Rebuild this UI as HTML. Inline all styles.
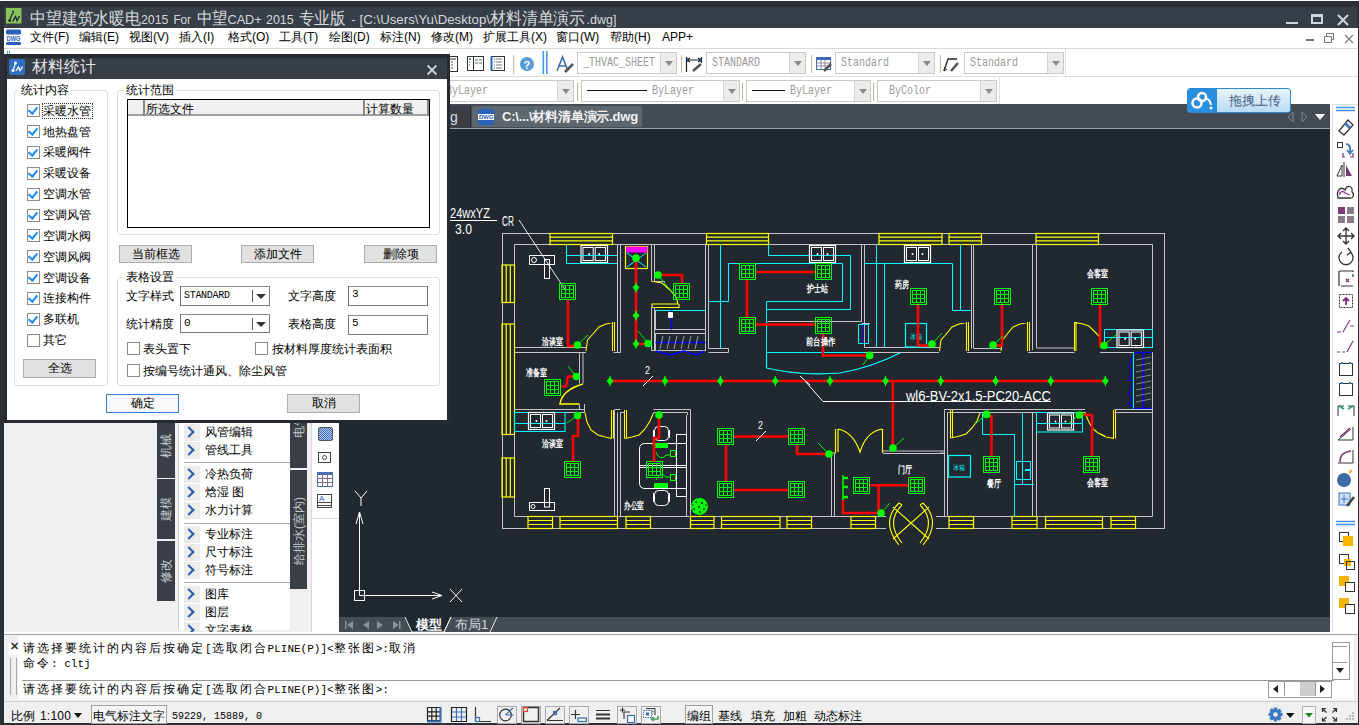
<!DOCTYPE html>
<html><head><meta charset="utf-8">
<style>
*{box-sizing:border-box;margin:0;padding:0}
html,body{width:1359px;height:725px;overflow:hidden;background:#2b3036;font-family:"Liberation Sans",sans-serif;position:relative}
.a{position:absolute}
.t{position:absolute;white-space:nowrap;line-height:1}
#title{left:0;top:0;width:1359px;height:28px;background:#2a2f36;border-top:1px solid #fff}
#title:before{content:"";position:absolute;left:4px;top:6px;width:1353px;height:21px;background:#383e47}
#menu{left:4px;top:28px;width:1354px;height:20px;background:#fff}
#tb{left:4px;top:48px;width:1354px;height:56px;background:#fff;border-top:1px solid #d9d9d9}
#tabbar{left:339px;top:104px;width:992px;height:25px;background:#454b53}
#draw{left:339px;top:129px;width:991px;height:488px;background:#212830;overflow:hidden}
#laytab{left:339px;top:617px;width:991px;height:15px;background:#464c54}
#rtb{left:1330px;top:104px;width:28px;height:528px;background:#fff}
#lpanel{left:4px;top:104px;width:335px;height:528px;background:#f0f0f0}
#cmd{left:4px;top:632px;width:1354px;height:69px;background:#f0f0f0}
#status{left:4px;top:701px;width:1354px;height:22px;background:#f0f0f0;border-top:1px solid #d0d0d0}
#dlg{left:4px;top:54px;width:446px;height:369px;background:#262b32}
#dlg:before{content:"";position:absolute;left:3px;top:4px;width:440px;height:21px;background:#373d45}
#dlgbody{left:3px;top:25px;width:440px;height:341px;background:#fff}
.menu span{position:absolute;top:2px;font-size:12px;color:#000;line-height:14px;white-space:nowrap}
.combo{position:absolute;background:#fff;border:1px solid #c9c9c9;font-family:"Liberation Mono",monospace;font-size:13px;color:#9a9a9a;line-height:20px;padding-left:5px;white-space:nowrap;overflow:hidden}
.combo .dd{position:absolute;right:0;top:0;width:16px;height:100%;background:#ececec;border-left:1px solid #d6d6d6}
.combo .dd:after{content:"";position:absolute;left:4px;top:8px;border-left:4px solid transparent;border-right:4px solid transparent;border-top:5px solid #8a8a8a}
.sep{position:absolute;width:1px;background:#c9b992}

.grp{position:absolute;border:1px solid #d7dfe6;border-radius:3px}
.lg{position:absolute;font-size:12px;line-height:14px;background:#fff;padding:0 2px;white-space:nowrap;color:#000}
.cb{position:absolute;width:13px;height:13px;border:1px solid #8c8c8c;background:#fff}
.cb.on:after{content:"";position:absolute;left:2px;top:0px;width:4px;height:7px;border-right:2px solid #1a8cff;border-bottom:2px solid #1a8cff;transform:rotate(40deg)}
.lb{position:absolute;font-size:12px;line-height:14px;white-space:nowrap;color:#000}
.btn{position:absolute;background:#e1e1e1;border:1px solid #adadad;font-size:12px;line-height:16px;text-align:center;color:#000}
.inp{position:absolute;border:1px solid #7a7a7a;border-top-color:#8a8a8a;background:#fff;font-family:"Liberation Mono",monospace;font-size:11px;line-height:17px;padding-left:3px;color:#000;white-space:nowrap}

.vt{position:absolute;background:#3a3f47}
.vtx{position:absolute;width:100px;height:14px;color:#c8ccd0;font-size:12px;line-height:14px;text-align:center;transform:rotate(-90deg);white-space:nowrap}
.mi{position:absolute;left:5px;width:106px;height:17px}
.mi i{position:absolute;left:0;top:0;width:16px;height:17px;background:#ececec}
.mi i:after{content:"";position:absolute;left:1px;top:4px;width:6px;height:6px;border-right:2.5px solid #2b5ea8;border-top:2.5px solid #2b5ea8;transform:rotate(45deg)}
.mi span{position:absolute;left:21px;top:1px;font-size:12px;line-height:14px;white-space:nowrap;color:#000}
.msep{position:absolute;left:5px;width:106px;height:1px;background:#a8a8a8}

.cl{position:absolute;white-space:nowrap;font-size:12px;line-height:14px;color:#000}
.cl b{font-weight:normal;letter-spacing:2px}
.cl i{font-style:normal;font-family:"Liberation Mono",monospace;font-size:11px}
.st{position:absolute;white-space:nowrap;font-size:12px;line-height:14px;color:#000;top:7px}
.sb{position:absolute;top:3px;width:19px;height:18px;border:1px solid #c8c8c8;background:#f7f7f7}
.ct{display:inline-block;transform:scaleX(.77);transform-origin:0 50%}
</style></head><body>
<div id="title" class="a">
  <svg class="a" style="left:6px;top:7px" width="16" height="16"><rect x="0" y="0" width="15.5" height="15.5" fill="#86c55a"/><path d="M6 3.5 Q7.5 2.5 7.5 4.5 Q7 6 6 6 L3.5 13" stroke="#223" stroke-width="1.2" fill="none"/><circle cx="3.6" cy="12.6" r="1.4" fill="#223"/><path d="M6.5 13.5 L9.5 8.5 L11 12.5 L13.5 8" stroke="#223" stroke-width="1.4" fill="none"/></svg>
  <svg class="a" style="left:0;top:0" width="700" height="28"><text x="30" y="23" font-size="17" fill="#d6dade" font-family="Liberation Sans" textLength="111.0" lengthAdjust="spacingAndGlyphs">中望建筑水暖电</text><text x="141" y="23" font-size="13.5" fill="#d6dade" font-family="Liberation Sans" textLength="27.3" lengthAdjust="spacingAndGlyphs">2015</text><text x="173.4" y="23" font-size="13.5" fill="#d6dade" font-family="Liberation Sans" textLength="17.6" lengthAdjust="spacingAndGlyphs">For</text><text x="196.6" y="23" font-size="17" fill="#d6dade" font-family="Liberation Sans" textLength="30.9" lengthAdjust="spacingAndGlyphs">中望</text><text x="227.5" y="23" font-size="13.5" fill="#d6dade" font-family="Liberation Sans" textLength="34.2" lengthAdjust="spacingAndGlyphs">CAD+</text><text x="266" y="23" font-size="13.5" fill="#d6dade" font-family="Liberation Sans" textLength="27.7" lengthAdjust="spacingAndGlyphs">2015</text><text x="298.8" y="23" font-size="17" fill="#d6dade" font-family="Liberation Sans" textLength="46.7" lengthAdjust="spacingAndGlyphs">专业版</text><text x="351.3" y="23" font-size="13.5" fill="#d6dade" font-family="Liberation Sans" textLength="4.2" lengthAdjust="spacingAndGlyphs">-</text><text x="359.5" y="23" font-size="13.5" fill="#d6dade" font-family="Liberation Sans" textLength="130.5" lengthAdjust="spacingAndGlyphs">[C:\Users\Yu\Desktop\</text><text x="490" y="23" font-size="17" fill="#d6dade" font-family="Liberation Sans" textLength="95.2" lengthAdjust="spacingAndGlyphs">材料清单演示</text><text x="586.5" y="23" font-size="13.5" fill="#d6dade" font-family="Liberation Sans" textLength="30.0" lengthAdjust="spacingAndGlyphs">.dwg]</text></svg>
  <div class="a" style="left:1286px;top:21px;width:12px;height:2px;background:#cfd6de"></div>
  <div class="a" style="left:1311px;top:13px;width:12px;height:10px;border:2px solid #cfd6de;border-top-width:3px"></div>
  <svg class="a" style="left:1337px;top:13px" width="12" height="12"><path d="M1 1L11 11M11 1L1 11" stroke="#cfd6de" stroke-width="2"/></svg>
</div>
<div id="menu" class="a menu">
  <svg class="a" style="left:2px;top:1px" width="16" height="18"><rect x="0" y="0.5" width="15" height="5" rx="1.5" fill="#2a5fc0"/><rect x="0" y="13" width="15" height="3" rx="1.2" fill="#2a5fc0"/><text x="7.5" y="11.8" font-size="6.5" font-weight="bold" fill="#2a5fc0" text-anchor="middle" font-family="Liberation Sans" textLength="14" lengthAdjust="spacingAndGlyphs">DWG</text></svg>
  <span style="left:26px">文件(F)</span>
  <span style="left:75px">编辑(E)</span>
  <span style="left:125px">视图(V)</span>
  <span style="left:175px">插入(I)</span>
  <span style="left:224px">格式(O)</span>
  <span style="left:275px">工具(T)</span>
  <span style="left:325px">绘图(D)</span>
  <span style="left:376px">标注(N)</span>
  <span style="left:427px">修改(M)</span>
  <span style="left:479px">扩展工具(X)</span>
  <span style="left:552px">窗口(W)</span>
  <span style="left:606px">帮助(H)</span>
  <span style="left:658px">APP+</span>
  <div class="a" style="left:1302px;top:11px;width:8px;height:2px;background:#777"></div>
  <svg class="a" style="left:1319px;top:4px" width="12" height="12"><path d="M1.5 4.5h7v6h-7z M3.5 4.5v-3h7v6h-2" stroke="#777" fill="none"/></svg>
  <svg class="a" style="left:1340px;top:6px" width="10" height="10"><path d="M1 1L9 9M9 1L1 9" stroke="#777" stroke-width="1.2"/></svg>
</div>
<div id="tb" class="a">
  <div class="a" style="left:3px;top:2px;width:1px;height:4px;background:#4a9af0"></div><div class="a" style="left:5px;top:2px;width:1px;height:4px;background:#4a9af0"></div>
  <div class="a" style="left:0;top:27px;width:1354px;height:1px;background:#e0e0e0"></div>
  <svg class="a" style="left:0;top:0" width="1061" height="28">
    <g transform="translate(-4,-48)">
      <rect x="445.5" y="55.5" width="12" height="15" fill="#fff" stroke="#333"/><rect x="447" y="57" width="9" height="2" fill="#999"/><path d="M447 61h2M451 61h2M447 64h2M451 64h2M447 67h2M451 67h2" stroke="#555"/>
      <rect x="467.5" y="55.5" width="16" height="14" fill="#fff" stroke="#333"/><path d="M473.5 55.5V69.5" stroke="#333"/><path d="M469 58h2" stroke="#2a62b8" stroke-width="1.5"/><path d="M475 59h3M479 59h3M475 62h3M479 62h3" stroke="#999" stroke-width="1.5"/><path d="M469 61h1M469 64h1" stroke="#555"/>
      <rect x="491.5" y="55.5" width="13" height="14" fill="#fff" stroke="#333"/><path d="M491.5 55.5V69.5" stroke="#2a62b8" stroke-width="2"/><path d="M494 58h1M494 61h1M494 64h1M494 67h1" stroke="#2a62b8"/><path d="M496 58h6M496 61h6M496 64h6M496 67h6" stroke="#777"/>
      <rect x="513" y="54" width="1.2" height="19" fill="#cfc3a8"/>
      <circle cx="527" cy="63" r="7" fill="#5b9bd5"/><text x="523.5" y="67.5" font-size="11" font-weight="bold" fill="#fff" font-family="Liberation Sans">?</text>
      <rect x="542.5" y="50" width="1.6" height="23" fill="#4a9af0"/><rect x="546" y="50" width="1.6" height="23" fill="#4a9af0"/>
      <path d="M557 70 L562.5 56 L568 70 M559 65 H566" stroke="#3d6eb0" stroke-width="1.6" fill="none"/><path d="M565 71 L573 63" stroke="#555" stroke-width="2.5"/>
      <path d="M686.5 56V71 M701.5 56V62 M687 59H701 M687 59l3 -2M687 59l3 2M701 59l-3 -2M701 59l-3 2" stroke="#222" stroke-width="1.2" fill="none"/><path d="M687.5 57V61M700.5 57V61" stroke="#2a62b8"/><path d="M693 70 L701 63" stroke="#555" stroke-width="2.5"/>
      <rect x="816.5" y="56.5" width="14" height="12" fill="#fff" stroke="#3a6ab8"/><rect x="816.5" y="56.5" width="14" height="2.5" fill="#3a6ab8"/><path d="M817 62H830M817 65H830M821 59V68M825 59V68" stroke="#8a6a8a" stroke-width="0.8"/><path d="M824 70 L831 63" stroke="#555" stroke-width="2.5"/>
      <path d="M944 70 L948 58 H957" stroke="#222" stroke-width="1.3" fill="none"/><path d="M944 70l1-4M944 70l3-2" stroke="#222"/><path d="M951 70 L958 62" stroke="#555" stroke-width="2.5"/>
    </g>
  </svg>
  <div class="combo" style="left:573px;top:3px;width:100px;height:22px"><span class="ct">_THVAC_SHEET</span><div class="dd"></div></div>
  <div class="sep" style="left:677px;top:6px;height:18px"></div>
  <div class="combo" style="left:702px;top:3px;width:100px;height:22px"><span class="ct">STANDARD</span><div class="dd"></div></div>
  <div class="sep" style="left:807px;top:6px;height:18px"></div>
  <div class="combo" style="left:831px;top:3px;width:100px;height:22px"><span class="ct">Standard</span><div class="dd"></div></div>
  <div class="sep" style="left:936px;top:6px;height:18px"></div>
  <div class="combo" style="left:960px;top:3px;width:100px;height:22px"><span class="ct">Standard</span><div class="dd"></div></div>
  <div class="a" style="left:1061px;top:0;width:1px;height:28px;background:#e0e0e0"></div>
  <div class="combo" style="left:436px;top:31px;width:134px;height:22px"><span class="ct">ByLayer</span><div class="dd"></div></div>
  <div class="sep" style="left:573px;top:34px;height:18px"></div>
  <div class="combo" style="left:577px;top:31px;width:159px;height:22px"><span style="display:inline-block;width:60px;border-top:1px solid #111;vertical-align:middle;margin:0 5px 0 0px"></span><span class="ct">ByLayer</span><div class="dd"></div></div>
  <div class="sep" style="left:738px;top:34px;height:18px"></div>
  <div class="combo" style="left:742px;top:31px;width:125px;height:22px"><span style="display:inline-block;width:33px;border-top:1px solid #111;vertical-align:middle;margin:0 5px 0 0px"></span><span class="ct">ByLayer</span><div class="dd"></div></div>
  <div class="sep" style="left:869px;top:34px;height:18px"></div>
  <div class="combo" style="left:873px;top:31px;width:120px;height:22px"><span class="ct">&nbsp;ByColor</span><div class="dd"></div></div>
  <div class="a" style="left:995px;top:28px;width:1px;height:28px;background:#e0e0e0"></div>
</div>
<div id="lpanel" class="a">
  <div class="vt" style="left:153px;top:319px;width:18px;height:55px"></div>
  <div class="vt" style="left:153px;top:375px;width:18px;height:60px"></div>
  <div class="vt" style="left:153px;top:437px;width:18px;height:60px"></div>
  <div class="vtx" style="left:112.0px;top:335.0px">机械</div>
  <div class="vtx" style="left:112.0px;top:398.0px">建模</div>
  <div class="vtx" style="left:112.0px;top:460.0px">修改</div>
  <div class="a" style="left:174px;top:319px;width:112px;height:207px;background:#fff;border-left:1px solid #cfcfcf">
    <div class="mi" style="top:1.0px"><i></i><span>风管编辑</span></div>
    <div class="mi" style="top:18.9px"><i></i><span>管线工具</span></div>
    <div class="mi" style="top:42.5px"><i></i><span>冷热负荷</span></div>
    <div class="mi" style="top:60.5px"><i></i><span>焓湿 图</span></div>
    <div class="mi" style="top:78.5px"><i></i><span>水力计算</span></div>
    <div class="mi" style="top:103.3px"><i></i><span>专业标注</span></div>
    <div class="mi" style="top:121.2px"><i></i><span>尺寸标注</span></div>
    <div class="mi" style="top:139.1px"><i></i><span>符号标注</span></div>
    <div class="mi" style="top:162.9px"><i></i><span>图库</span></div>
    <div class="mi" style="top:180.5px"><i></i><span>图层</span></div>
    <div class="mi" style="top:198.5px"><i></i><span>文字表格</span></div>
    <div class="msep" style="top:39.3px"></div>
    <div class="msep" style="top:99.6px"></div>
    <div class="msep" style="top:159.0px"></div>
  </div>
  <div class="vt" style="left:286px;top:319px;width:17px;height:45px"></div>
  <div class="vt" style="left:286px;top:366px;width:17px;height:119px"></div>
  <div class="vtx" style="left:245px;top:315px">电气</div>
  <div class="vtx" style="left:245.0px;top:420.0px">给排水(室内)</div>
  <div class="a" style="left:307px;top:319px;width:28px;height:209px;background:#fff;border-left:1px solid #d8d8d8">
    <div class="a" style="left:6px;top:4px;width:15px;height:14px;border:1px solid #555;border-radius:2px;background:repeating-conic-gradient(#3d6cc0 0 25%,#b8c8ec 0 50%) 0 0/2px 2px"></div>
    <div class="a" style="left:6px;top:29px;width:13px;height:11px;border:1px solid #444"><div class="a" style="left:3px;top:2px;width:5px;height:5px;border:1px solid #444;border-radius:50%"></div></div>
    <div class="a" style="left:5px;top:49px;width:16px;height:15px;border:1px solid #4a6fb0;border-top:3px solid #4a6fb0;background:repeating-linear-gradient(90deg,transparent 0 4px,#8a6a8a 4px 5px),repeating-linear-gradient(0deg,transparent 0 3px,#8a6a8a 3px 4px)"></div>
    <div class="a" style="left:5px;top:71px;width:15px;height:14px;border:1px solid #444;background:linear-gradient(transparent 7px,#444 7px 8px,transparent 8px 10px,#444 10px 11px,transparent 11px)"><div class="t" style="left:1px;top:0;font-size:8px;color:#2a62b8">A</div></div>
    <div class="a" style="left:0;top:95px;width:28px;height:1px;background:#e0e0e0"></div>
  </div>
</div>
<div id="tabbar" class="a">
  <div class="a" style="left:0;top:2px;width:132px;height:23px;background:#3a3f46;border-right:1px solid #2a2e33"></div>
  <div class="t" style="left:111px;top:6px;font-size:14px;color:#d8dce0">g</div>
  <div class="a" style="left:133px;top:2px;width:170px;height:21px;background:#5c666f;border-radius:3px 3px 0 0"></div>
  <div class="a" style="left:139px;top:5px;width:16px;height:16px;background:#2a62b8;border-radius:2px"><div class="a" style="left:0;top:5px;width:16px;height:6px;background:#fff"></div><div class="t" style="left:1px;top:5px;font-size:6px;line-height:6px;color:#2a62b8;font-weight:bold">DWG</div></div>
  <div class="t" style="left:163px;top:6px;font-size:13px;color:#f2f2f2;font-weight:bold;letter-spacing:-0.2px">C:\...\材料清单演示.dwg</div>
  <svg class="a" style="left:948px;top:7px" width="40" height="12"><path d="M6 1 L1 6 L6 11 Z" fill="none" stroke="#7d858d"/><path d="M15 1 L20 6 L15 11 Z" fill="none" stroke="#7d858d"/><path d="M28 3 L38 3 L33 9 Z" fill="#fff"/></svg>
</div>
<div id="draw" class="a"><!--DRAW--><svg class="a" style="left:0;top:0" width="991" height="488"><g transform="translate(-339,-129)"><rect x="502.5" y="233.5" width="662.0" height="295.0" stroke="#c4c4c4" stroke-width="1" fill="none"/><path d="M514.5 244.5 L514.5 516.5" stroke="#c4c4c4" stroke-width="1" fill="none" /><path d="M514.5 244.5 L1152.5 244.5" stroke="#c4c4c4" stroke-width="1" fill="none" /><path d="M1152.5 244.5 L1152.5 347.5" stroke="#c4c4c4" stroke-width="1" fill="none" /><path d="M1152.5 412.5 L1152.5 516.5" stroke="#c4c4c4" stroke-width="1" fill="none" /><path d="M514.5 516.5 L1152.5 516.5" stroke="#c4c4c4" stroke-width="1" fill="none" /><rect x="550.0" y="233.5" width="62.5" height="11.0" stroke="#ffff00" stroke-width="1.2" fill="none"/><path d="M550.0 237.2H612.5M550.0 240.8H612.5" stroke="#ffff00" stroke-width="1.2"/><rect x="706.5" y="233.5" width="62.0" height="11.0" stroke="#ffff00" stroke-width="1.2" fill="none"/><path d="M706.5 237.2H768.5M706.5 240.8H768.5" stroke="#ffff00" stroke-width="1.2"/><rect x="879.0" y="233.5" width="63.0" height="11.0" stroke="#ffff00" stroke-width="1.2" fill="none"/><path d="M879.0 237.2H942.0M879.0 240.8H942.0" stroke="#ffff00" stroke-width="1.2"/><rect x="949.0" y="233.5" width="32.5" height="11.0" stroke="#ffff00" stroke-width="1.2" fill="none"/><path d="M949.0 237.2H981.5M949.0 240.8H981.5" stroke="#ffff00" stroke-width="1.2"/><rect x="1036.0" y="233.5" width="62.5" height="11.0" stroke="#ffff00" stroke-width="1.2" fill="none"/><path d="M1036.0 237.2H1098.5M1036.0 240.8H1098.5" stroke="#ffff00" stroke-width="1.2"/><rect x="502.0" y="265.0" width="12.5" height="37.5" stroke="#ffff00" stroke-width="1.2" fill="none"/><path d="M506.2 265.0V302.5M510.3 265.0V302.5" stroke="#ffff00" stroke-width="1.2"/><rect x="502.0" y="324.0" width="12.5" height="110.5" stroke="#ffff00" stroke-width="1.2" fill="none"/><path d="M506.2 324.0V434.5M510.3 324.0V434.5" stroke="#ffff00" stroke-width="1.2"/><rect x="502.0" y="458.0" width="12.5" height="39.0" stroke="#ffff00" stroke-width="1.2" fill="none"/><path d="M506.2 458.0V497.0M510.3 458.0V497.0" stroke="#ffff00" stroke-width="1.2"/><rect x="528.0" y="516.5" width="24.5" height="12.0" stroke="#ffff00" stroke-width="1.2" fill="none"/><path d="M528.0 520.5H552.5M528.0 524.5H552.5" stroke="#ffff00" stroke-width="1.2"/><rect x="560.0" y="516.5" width="57.5" height="12.0" stroke="#ffff00" stroke-width="1.2" fill="none"/><path d="M560.0 520.5H617.5M560.0 524.5H617.5" stroke="#ffff00" stroke-width="1.2"/><rect x="626.0" y="516.5" width="24.5" height="12.0" stroke="#ffff00" stroke-width="1.2" fill="none"/><path d="M626.0 520.5H650.5M626.0 524.5H650.5" stroke="#ffff00" stroke-width="1.2"/><rect x="690.5" y="516.5" width="23.5" height="12.0" stroke="#ffff00" stroke-width="1.2" fill="none"/><path d="M690.5 520.5H714.0M690.5 524.5H714.0" stroke="#ffff00" stroke-width="1.2"/><rect x="721.5" y="516.5" width="58.5" height="12.0" stroke="#ffff00" stroke-width="1.2" fill="none"/><path d="M721.5 520.5H780.0M721.5 524.5H780.0" stroke="#ffff00" stroke-width="1.2"/><rect x="787.0" y="516.5" width="24.5" height="12.0" stroke="#ffff00" stroke-width="1.2" fill="none"/><path d="M787.0 520.5H811.5M787.0 524.5H811.5" stroke="#ffff00" stroke-width="1.2"/><rect x="851.0" y="516.5" width="24.5" height="12.0" stroke="#ffff00" stroke-width="1.2" fill="none"/><path d="M851.0 520.5H875.5M851.0 524.5H875.5" stroke="#ffff00" stroke-width="1.2"/><rect x="949.0" y="516.5" width="24.5" height="12.0" stroke="#ffff00" stroke-width="1.2" fill="none"/><path d="M949.0 520.5H973.5M949.0 524.5H973.5" stroke="#ffff00" stroke-width="1.2"/><rect x="1012.0" y="516.5" width="25.0" height="12.0" stroke="#ffff00" stroke-width="1.2" fill="none"/><path d="M1012.0 520.5H1037.0M1012.0 524.5H1037.0" stroke="#ffff00" stroke-width="1.2"/><rect x="1045.5" y="516.5" width="57.0" height="12.0" stroke="#ffff00" stroke-width="1.2" fill="none"/><path d="M1045.5 520.5H1102.5M1045.5 524.5H1102.5" stroke="#ffff00" stroke-width="1.2"/><rect x="1111.0" y="516.5" width="24.5" height="12.0" stroke="#ffff00" stroke-width="1.2" fill="none"/><path d="M1111.0 520.5H1135.5M1111.0 524.5H1135.5" stroke="#ffff00" stroke-width="1.2"/><path d="M617.5 244.5 L617.5 352.5" stroke="#c4c4c4" stroke-width="1" fill="none" /><path d="M620.5 244.5 L620.5 352.5" stroke="#c4c4c4" stroke-width="1" fill="none" /><path d="M514.5 347.5 L586.0 347.5" stroke="#c4c4c4" stroke-width="1" fill="none" /><path d="M514.5 352.5 L586.0 352.5" stroke="#c4c4c4" stroke-width="1" fill="none" /><path d="M613.5 352.5 L620.5 352.5" stroke="#c4c4c4" stroke-width="1" fill="none" /><path d="M651.5 244.5 L651.5 281.5 L665.0 281.5" stroke="#c4c4c4" stroke-width="1" fill="none" /><path d="M654.5 244.5 L654.5 281.5" stroke="#c4c4c4" stroke-width="1" fill="none" /><path d="M705.5 244.5 L705.5 350.5" stroke="#c4c4c4" stroke-width="1" fill="none" /><path d="M708.5 244.5 L708.5 348.5 L728.5 348.5 L728.5 352.5 L708.5 352.5" stroke="#c4c4c4" stroke-width="1" fill="none" /><path d="M651.5 307.5 L651.5 350.5 L655.0 350.5" stroke="#c4c4c4" stroke-width="1" fill="none" /><path d="M654.5 307.5 L654.5 350.5" stroke="#c4c4c4" stroke-width="1" fill="none" /><rect x="655.5" y="310.5" width="50.0" height="19.0" stroke="#c4c4c4" stroke-width="1" fill="none"/><rect x="655.5" y="333.5" width="50.0" height="17.0" stroke="#c4c4c4" stroke-width="1" fill="none"/><path d="M655.5 310.5 L705.5 310.5" stroke="#00ffff" stroke-width="1" fill="none" /><path d="M671.5 310.5 L671.5 329.5" stroke="#0000ff" stroke-width="1.5" fill="none" /><rect x="668" y="312" width="5" height="6" fill="#ffffff" rx="1"/><path d="M655.5 342.5 L705.5 342.5" stroke="#0000ff" stroke-width="1.5" fill="none" /><path d="M660 349L663 336M667 349L670 336M674 349L677 336M681 349L684 336M688 349L691 336M695 349L698 336" stroke="#bbb" stroke-width="0.8"/><path d="M656.0 351.0 L670.0 355.0 L684.0 351.0 L697.0 355.0 L704.0 351.0" stroke="#0000ff" stroke-width="1.5" fill="none" /><rect x="625.5" y="246.5" width="22.0" height="22.0" stroke="#ffff00" stroke-width="1.2" fill="none"/><rect x="626.5" y="247.0" width="20.5" height="5.0" stroke="#ff00ff" stroke-width="1" fill="#ff00ff"/><path d="M627.0 253.0 L646.0 267.0" stroke="#00ffff" stroke-width="1" fill="none" /><path d="M646.0 253.0 L627.0 267.0" stroke="#00ffff" stroke-width="1" fill="none" /><path d="M861.5 244.5 L861.5 321.5" stroke="#c4c4c4" stroke-width="1" fill="none" /><path d="M864.5 244.5 L864.5 347.5" stroke="#c4c4c4" stroke-width="1" fill="none" /><path d="M767.5 321.5 L861.5 321.5" stroke="#c4c4c4" stroke-width="1" fill="none" /><path d="M861.5 323.5 L870.0 323.5" stroke="#c4c4c4" stroke-width="1" fill="none" /><path d="M720.5 244.5 L720.5 348.5" stroke="#00ffff" stroke-width="1" fill="none" /><path d="M708.5 301.5 L728.5 301.5 L728.5 263.5 L842.5 263.5 L842.5 301.5 L766.5 301.5 L766.5 352.0" stroke="#00ffff" stroke-width="1" fill="none" /><path d="M768.5 244.5 L768.5 255.5 L850.5 255.5 L850.5 309.5 L767.0 309.5" stroke="#00ffff" stroke-width="1" fill="none" /><rect x="858.5" y="324.5" width="10.0" height="19.0" stroke="#00ffff" stroke-width="1" fill="none"/><path d="M863.5 324.5 L863.5 343.5" stroke="#0000ff" stroke-width="1.2" fill="none" /><path d="M766.5 352.5 H900 M766.5 352.5 V368 Q800 376 840 373 Q870 368 900 353" stroke="#00ffff" stroke-width="1.2" fill="none"/><path d="M971.5 244.5 L971.5 348.5" stroke="#c4c4c4" stroke-width="1" fill="none" /><path d="M973.5 244.5 L973.5 348.5" stroke="#c4c4c4" stroke-width="1" fill="none" /><path d="M864.5 347.5 L939.0 347.5" stroke="#c4c4c4" stroke-width="1" fill="none" /><path d="M864.5 352.5 L939.0 352.5" stroke="#c4c4c4" stroke-width="1" fill="none" /><path d="M967.0 352.5 L1001.0 352.5" stroke="#c4c4c4" stroke-width="1" fill="none" /><path d="M973.5 348.5 L1001.0 348.5" stroke="#c4c4c4" stroke-width="1" fill="none" /><path d="M876.5 244.5 L876.5 347.5" stroke="#00ffff" stroke-width="1" fill="none" /><path d="M884.5 263.5 L884.5 347.5" stroke="#00ffff" stroke-width="1" fill="none" /><path d="M864.5 263.5 L952.5 263.5 L952.5 310.5 L971.0 310.5" stroke="#00ffff" stroke-width="1" fill="none" /><path d="M960.5 244.5 L960.5 310.5" stroke="#00ffff" stroke-width="1" fill="none" /><rect x="905.5" y="323.5" width="21.0" height="23.5" stroke="#00ffff" stroke-width="1.2" fill="none"/><text x="910" y="339" font-size="7" fill="#00ffff" font-weight="normal" font-family='"Liberation Sans",sans-serif' textLength="12" lengthAdjust="spacingAndGlyphs">冰箱</text><path d="M1032.5 244.5 L1032.5 350.0" stroke="#c4c4c4" stroke-width="1" fill="none" /><path d="M1036.5 244.5 L1036.5 348.0" stroke="#c4c4c4" stroke-width="1" fill="none" /><path d="M1028.0 352.5 L1074.5 352.5" stroke="#c4c4c4" stroke-width="1" fill="none" /><path d="M1036.5 348.0 L1074.5 348.0" stroke="#c4c4c4" stroke-width="1" fill="none" /><path d="M1100.0 347.5 L1152.5 347.5" stroke="#c4c4c4" stroke-width="1" fill="none" /><path d="M1100.0 352.5 L1152.5 352.5" stroke="#c4c4c4" stroke-width="1" fill="none" /><rect x="1104.5" y="329.5" width="48.0" height="18.0" stroke="#00ffff" stroke-width="1" fill="none"/><path d="M1104.5 337.5 L1152.5 337.5" stroke="#00ffff" stroke-width="1" fill="none" /><path d="M1134.0 352.5 L1152.0 352.5" stroke="#0000ff" stroke-width="1.3" fill="none" /><path d="M1134.0 408.5 L1152.0 408.5" stroke="#0000ff" stroke-width="1.3" fill="none" /><path d="M1134.0 353.0 L1129.0 366.0 L1132.0 370.0 L1129.0 380.0 L1134.0 381.0 L1129.0 394.0 L1132.0 398.0 L1129.0 404.0 L1134.0 408.0" stroke="#0000ff" stroke-width="1.2" fill="none" /><path d="M1133.5 352.5 L1133.5 408.5" stroke="#00ffff" stroke-width="1" fill="none" /><path d="M1143.5 352.5 L1143.5 408.5" stroke="#0000ff" stroke-width="1.5" fill="none" /><path d="M1136 360L1151 357M1136 366L1151 363M1136 372L1151 369M1136 378L1151 375M1136 384L1151 381M1136 390L1151 387M1136 396L1151 393M1136 402L1151 399" stroke="#aaa" stroke-width="0.7"/><path d="M1152.5 352.5 L1152.5 412.5" stroke="#c4c4c4" stroke-width="1" fill="none" /><rect x="581.0" y="245.5" width="26.5" height="17.0" stroke="#ffffff" stroke-width="1.2" fill="none"/><rect x="583.0" y="247.5" width="10.2" height="13.0" stroke="#ffffff" stroke-width="1" fill="none"/><rect x="595.2" y="247.5" width="10.2" height="13.0" stroke="#ffffff" stroke-width="1" fill="none"/><circle cx="589.2" cy="254.0" r="1" fill="#ffffff"/><circle cx="599.2" cy="254.0" r="1" fill="#ffffff"/><rect x="809.5" y="245.5" width="26.0" height="17.0" stroke="#ffffff" stroke-width="1.2" fill="none"/><rect x="811.5" y="247.5" width="10.0" height="13.0" stroke="#ffffff" stroke-width="1" fill="none"/><rect x="823.5" y="247.5" width="10.0" height="13.0" stroke="#ffffff" stroke-width="1" fill="none"/><circle cx="817.5" cy="254.0" r="1" fill="#ffffff"/><circle cx="827.5" cy="254.0" r="1" fill="#ffffff"/><rect x="904.5" y="245.5" width="26.0" height="17.0" stroke="#ffffff" stroke-width="1.2" fill="none"/><rect x="906.5" y="247.5" width="10.0" height="13.0" stroke="#ffffff" stroke-width="1" fill="none"/><rect x="918.5" y="247.5" width="10.0" height="13.0" stroke="#ffffff" stroke-width="1" fill="none"/><circle cx="912.5" cy="254.0" r="1" fill="#ffffff"/><circle cx="922.5" cy="254.0" r="1" fill="#ffffff"/><rect x="1117.0" y="330.0" width="26.5" height="17.5" stroke="#ffffff" stroke-width="1.2" fill="none"/><rect x="1119.0" y="332.0" width="10.2" height="13.5" stroke="#ffffff" stroke-width="1" fill="none"/><rect x="1131.2" y="332.0" width="10.2" height="13.5" stroke="#ffffff" stroke-width="1" fill="none"/><circle cx="1125.2" cy="338.8" r="1" fill="#ffffff"/><circle cx="1135.2" cy="338.8" r="1" fill="#ffffff"/><path d="M566.5 244.5 L566.5 263.5 L617.0 263.5" stroke="#00ffff" stroke-width="1" fill="none" /><path d="M566.5 255.5 L617.0 255.5" stroke="#00ffff" stroke-width="1" fill="none" /><rect x="529.5" y="255.5" width="25.0" height="9.0" stroke="#ffffff" stroke-width="1" fill="none"/><rect x="544.5" y="259.5" width="5.0" height="19.0" stroke="#ffffff" stroke-width="1" fill="none"/><circle cx="534" cy="260" r="2.5" stroke="#ffffff" fill="none"/><path d="M519.0 220.0 L566.0 291.0" stroke="#ffffff" stroke-width="0.9" fill="none" /><text x="502" y="225.5" font-size="14.5" fill="#ffffff" font-weight="normal" font-family='"Liberation Sans",sans-serif' textLength="12" lengthAdjust="spacingAndGlyphs">CR</text><text x="450" y="217.5" font-size="14.5" fill="#ffffff" font-weight="normal" font-family='"Liberation Sans",sans-serif' textLength="40" lengthAdjust="spacingAndGlyphs">24wxYZ</text><path d="M450.0 220.5 L497.0 220.5" stroke="#ffffff" stroke-width="1" fill="none" /><text x="455" y="233.5" font-size="14.5" fill="#ffffff" font-weight="normal" font-family='"Liberation Sans",sans-serif' textLength="17" lengthAdjust="spacingAndGlyphs">3.0</text><path d="M612.5 322 V351 M614.5 322 V351 M586 351 L587.5 340 L592 335 L599 327 L606 324 L613 322.5" stroke="#ffff00" stroke-width="1.1" fill="none"/><path d="M653 281.5 L662 283 L670 290 L676 297 L678 304 L652 304 V307.5 H679 V304" stroke="#ffff00" stroke-width="1.1" fill="none"/><path d="M966.5 322 V351 M968.5 322 V351 M939.5 351 L941 340 L945 335.5 L952 327 L959 324 L967 322.5" stroke="#ffff00" stroke-width="1.1" fill="none"/><path d="M1027.5 322 V351 M1029.5 322 V351 M1001 351 L1002.5 340 L1006 335.5 L1013 327 L1020 324 L1028 322.5" stroke="#ffff00" stroke-width="1.1" fill="none"/><path d="M1074.5 322 V351 M1076 322 V351 M1075 322.5 L1083 324 L1089 326 L1095 332 L1100 337 L1100 345" stroke="#ffff00" stroke-width="1.1" fill="none"/><path d="M583 384 Q562 390 560 404 H579.5" stroke="#ffff00" stroke-width="1.5" fill="none"/><path d="M579.5 352.5 L579.5 383.5" stroke="#c4c4c4" stroke-width="1" fill="none" /><path d="M583.0 352.5 L583.0 383.5" stroke="#c4c4c4" stroke-width="1" fill="none" /><path d="M514.5 409.5 L584.5 409.5" stroke="#c4c4c4" stroke-width="1" fill="none" /><path d="M514.5 412.5 L584.5 412.5" stroke="#c4c4c4" stroke-width="1" fill="none" /><path d="M579.5 404.0 L579.5 409.5" stroke="#c4c4c4" stroke-width="1" fill="none" /><path d="M584.5 404.0 L584.5 412.5" stroke="#c4c4c4" stroke-width="1" fill="none" /><path d="M585 412.5 L587 422 L591 430 L598 435 L605 437 L612 438.5 M611.5 410 V438.5 M613.5 410 V438.5" stroke="#ffff00" stroke-width="1.1" fill="none"/><path d="M614.5 409.5 L614.5 516.5" stroke="#c4c4c4" stroke-width="1" fill="none" /><path d="M617.5 412.5 L617.5 516.5" stroke="#c4c4c4" stroke-width="1" fill="none" /><path d="M620.5 412.5 L620.5 516.5" stroke="#c4c4c4" stroke-width="1" fill="none" /><path d="M614.5 409.5 L620.5 409.5" stroke="#c4c4c4" stroke-width="1" fill="none" /><path d="M624.5 410 V438.5 M626.5 410 V438.5 M625 438.5 L632 437 L639 435 L645 429 L650 421 L653.5 413" stroke="#ffff00" stroke-width="1.1" fill="none"/><path d="M620.5 412.5 L625.0 412.5" stroke="#c4c4c4" stroke-width="1" fill="none" /><path d="M653.5 409.5 L690.5 409.5 L690.5 516.5" stroke="#c4c4c4" stroke-width="1" fill="none" /><path d="M653.5 412.5 L687.5 412.5 L687.5 415.0" stroke="#c4c4c4" stroke-width="1" fill="none" /><path d="M686.5 415.0 L686.5 516.5" stroke="#c4c4c4" stroke-width="1" fill="none" /><rect x="514.5" y="412.5" width="50.5" height="19.0" stroke="#00ffff" stroke-width="1" fill="none"/><path d="M514.5 423.5 L565.0 423.5" stroke="#00ffff" stroke-width="1" fill="none" /><rect x="528.5" y="412.5" width="26.0" height="17.0" stroke="#ffffff" stroke-width="1.2" fill="none"/><rect x="530.5" y="414.5" width="10.0" height="13.0" stroke="#ffffff" stroke-width="1" fill="none"/><rect x="542.5" y="414.5" width="10.0" height="13.0" stroke="#ffffff" stroke-width="1" fill="none"/><circle cx="536.5" cy="421.0" r="1" fill="#ffffff"/><circle cx="546.5" cy="421.0" r="1" fill="#ffffff"/><rect x="529.5" y="502.5" width="25.0" height="8.0" stroke="#ffffff" stroke-width="1" fill="none"/><rect x="544.5" y="488.5" width="5.0" height="18.5" stroke="#ffffff" stroke-width="1" fill="none"/><circle cx="533" cy="506.5" r="2" stroke="#ffffff" fill="none"/><path d="M640 465.5 H686 M640 467.5 H686 M676.5 443.5 H686 M676.5 488.5 H686" stroke="#ffffff" stroke-width="1"/><path d="M686 443.5 H645 Q639.5 443.5 639.5 449 V483 Q639.5 488.5 645 488.5 H686" stroke="#ffffff" fill="none"/><rect x="676.5" y="434.5" width="10" height="62" stroke="#ffffff" fill="none"/><rect x="654.5" y="426.5" width="14" height="14" rx="4" stroke="#ffffff" fill="none"/><rect x="654.5" y="490.5" width="14" height="15" rx="4" stroke="#ffffff" fill="none"/><path d="M653.5 430V438M669.5 430V438M653.5 493V502M669.5 493V502" stroke="#ffffff"/><rect x="654" y="443" width="14" height="5" fill="#00ff00"/><rect x="654" y="483" width="14" height="5" fill="#00ff00"/><rect x="670.5" y="450.5" width="5" height="6" stroke="#00ff00" fill="none"/><rect x="670.5" y="474.5" width="5" height="6" stroke="#00ff00" fill="none"/><path d="M656 452 Q660 462 666 455 H670 M656 480 Q660 470 666 477 H670" stroke="#00ff00" fill="none"/><rect x="646.5" y="461.5" width="16.0" height="16.0" stroke="#00ff00" stroke-width="1" fill="none"/><rect x="648.5" y="463.5" width="12.0" height="12.0" stroke="#00ff00" stroke-width="1" fill="none"/><path d="M652.5 463.5V475.5M648.5 467.5H660.5M656.5 463.5V475.5M648.5 471.5H660.5" stroke="#00ff00" stroke-width="1"/><circle cx="699.5" cy="506.5" r="8.5" fill="#00ff00"/><g fill="#212830"><circle cx="696" cy="502" r="1"/><circle cx="702" cy="503" r="1.1"/><circle cx="699" cy="507" r="1"/><circle cx="694" cy="509" r="1"/><circle cx="704" cy="509" r="1"/><circle cx="700" cy="512" r="1"/><circle cx="693" cy="505" r="0.8"/><circle cx="706" cy="505" r="0.8"/></g><path d="M831.5 453.0 L831.5 516.5" stroke="#c4c4c4" stroke-width="1" fill="none" /><path d="M834.5 453.0 L834.5 516.5" stroke="#c4c4c4" stroke-width="1" fill="none" /><path d="M831.5 453.0 L836.0 453.0" stroke="#c4c4c4" stroke-width="1" fill="none" /><path d="M835.5 429 V453 M838 429 V452 M838 429 Q853 432 860 452 Q866 432 882 429 M882.5 429 V453" stroke="#ffff00" stroke-width="1.2" fill="none"/><path d="M883.0 451.0 L944.5 451.0" stroke="#c4c4c4" stroke-width="1" fill="none" /><path d="M883.0 453.5 L944.5 453.5" stroke="#c4c4c4" stroke-width="1" fill="none" /><path d="M944.5 409.5 L944.5 516.5" stroke="#c4c4c4" stroke-width="1" fill="none" /><path d="M947.5 412.5 L947.5 516.5" stroke="#c4c4c4" stroke-width="1" fill="none" /><path d="M944.5 409.5 L1085.0 409.5" stroke="#c4c4c4" stroke-width="1" fill="none" /><path d="M947.5 412.5 L1085.0 412.5" stroke="#c4c4c4" stroke-width="1" fill="none" /><path d="M940.0 453.0 L944.5 453.0" stroke="#c4c4c4" stroke-width="1" fill="none" /><path d="M950.5 410 V438 M952.5 410 V438 M951 438 L958 436.5 L966 434 L972 428 L977 421 L980 413" stroke="#ffff00" stroke-width="1.1" fill="none"/><rect x="886" y="515" width="50" height="15" fill="#212830"/><g stroke="#ffff00" stroke-width="1.1" fill="none"><path d="M899 503 Q880 522 899 545 M902 505 Q885 522 902 543 M923 503 Q942 522 923 545 M920 505 Q937 522 920 543 M899 503 L902 505 M923 503 L920 505 M893 507 L929 539 M929 507 L893 539"/></g><path d="M1032.5 412.5 L1032.5 516.5" stroke="#c4c4c4" stroke-width="1" fill="none" /><path d="M1036.5 412.5 L1036.5 516.5" stroke="#c4c4c4" stroke-width="1" fill="none" /><path d="M982.5 412.5 L982.5 434.5 L1014.5 434.5 L1014.5 516.5" stroke="#00ffff" stroke-width="1" fill="none" /><path d="M1022.5 412.5 L1022.5 484.5" stroke="#00ffff" stroke-width="1" fill="none" /><path d="M1014.5 484.5 L1034.0 484.5" stroke="#00ffff" stroke-width="1" fill="none" /><rect x="1016.5" y="461.5" width="14.0" height="18.0" stroke="#00ffff" stroke-width="1" fill="none"/><path d="M1025.0 470.0 L1030.0 470.0" stroke="#00ffff" stroke-width="2" fill="none" /><rect x="948.5" y="455.5" width="22.0" height="21.5" stroke="#00ffff" stroke-width="1.2" fill="none"/><text x="953" y="470" font-size="7" fill="#00ffff" font-weight="normal" font-family='"Liberation Sans",sans-serif' textLength="12" lengthAdjust="spacingAndGlyphs">冰箱</text><rect x="1036.5" y="412.5" width="46.0" height="19.5" stroke="#00ffff" stroke-width="1" fill="none"/><path d="M1036.5 423.5 L1082.5 423.5" stroke="#00ffff" stroke-width="1" fill="none" /><rect x="1047.5" y="413.0" width="26.0" height="17.0" stroke="#ffffff" stroke-width="1.2" fill="none"/><rect x="1049.5" y="415.0" width="10.0" height="13.0" stroke="#ffffff" stroke-width="1" fill="none"/><rect x="1061.5" y="415.0" width="10.0" height="13.0" stroke="#ffffff" stroke-width="1" fill="none"/><circle cx="1055.5" cy="421.5" r="1" fill="#ffffff"/><circle cx="1065.5" cy="421.5" r="1" fill="#ffffff"/><path d="M1085 412.5 L1088 420 L1092 428 L1098 433 L1105 436" stroke="#ffff00" stroke-width="1.1" fill="none"/><path d="M1114.5 409.5 L1152.5 409.5" stroke="#c4c4c4" stroke-width="1" fill="none" /><path d="M1114.5 412.5 L1152.5 412.5" stroke="#c4c4c4" stroke-width="1" fill="none" /><path d="M1113.5 410 V438.5 M1115.5 410 V438.5 M1114 438.5 L1106 437 L1100 434" stroke="#ffff00" stroke-width="1.1" fill="none"/><path d="M568.0 299.0 L568.0 346.0 L576.0 346.0" stroke="#ff0000" stroke-width="2.6" fill="none" stroke-linejoin="miter"/><path d="M636.0 258.0 L636.0 344.0 L648.0 344.0" stroke="#ff0000" stroke-width="2.6" fill="none" stroke-linejoin="miter"/><path d="M658.0 275.0 L682.0 275.0 L682.0 283.0" stroke="#ff0000" stroke-width="2.6" fill="none" stroke-linejoin="miter"/><path d="M755.0 272.0 L815.0 272.0" stroke="#ff0000" stroke-width="2.6" fill="none" stroke-linejoin="miter"/><path d="M747.0 280.0 L747.0 317.0" stroke="#ff0000" stroke-width="2.6" fill="none" stroke-linejoin="miter"/><path d="M755.0 324.5 L815.0 324.5" stroke="#ff0000" stroke-width="2.6" fill="none" stroke-linejoin="miter"/><path d="M823.0 334.0 L823.0 355.5 L870.0 355.5" stroke="#ff0000" stroke-width="2.6" fill="none" stroke-linejoin="miter"/><path d="M918.0 304.0 L918.0 345.5 L931.0 345.5" stroke="#ff0000" stroke-width="2.6" fill="none" stroke-linejoin="miter"/><path d="M1002.0 304.0 L1002.0 345.5 L996.0 345.5" stroke="#ff0000" stroke-width="2.6" fill="none" stroke-linejoin="miter"/><path d="M1100.0 304.0 L1100.0 345.5 L1104.0 345.5" stroke="#ff0000" stroke-width="2.6" fill="none" stroke-linejoin="miter"/><path d="M560.0 386.5 L566.0 386.5 L568.0 376.5 L576.0 376.5" stroke="#ff0000" stroke-width="2.6" fill="none" stroke-linejoin="miter"/><path d="M610.0 381.0 L1105.0 381.0" stroke="#ff0000" stroke-width="2.6" fill="none" stroke-linejoin="miter"/><path d="M892.8 381.0 L892.8 448.0" stroke="#ff0000" stroke-width="2.6" fill="none" stroke-linejoin="miter"/><path d="M578.0 415.0 L578.0 436.0 L573.0 436.0 L573.0 462.0" stroke="#ff0000" stroke-width="2.6" fill="none" stroke-linejoin="miter"/><path d="M659.0 415.0 L659.0 438.0 L654.0 438.0 L654.0 462.0" stroke="#ff0000" stroke-width="2.6" fill="none" stroke-linejoin="miter"/><path d="M734.0 436.5 L788.0 436.5" stroke="#ff0000" stroke-width="2.6" fill="none" stroke-linejoin="miter"/><path d="M726.0 445.0 L726.0 481.0" stroke="#ff0000" stroke-width="2.6" fill="none" stroke-linejoin="miter"/><path d="M734.0 490.0 L788.0 490.0" stroke="#ff0000" stroke-width="2.6" fill="none" stroke-linejoin="miter"/><path d="M797.0 445.0 L797.0 454.0 L828.0 454.0" stroke="#ff0000" stroke-width="2.6" fill="none" stroke-linejoin="miter"/><path d="M870.0 485.3 L908.0 485.3" stroke="#ff0000" stroke-width="2.6" fill="none" stroke-linejoin="miter"/><path d="M878.5 485.0 L878.5 513.0 L843.0 513.0 L843.0 500.0" stroke="#ff0000" stroke-width="2.6" fill="none" stroke-linejoin="miter"/><path d="M991.5 415.0 L991.5 456.0" stroke="#ff0000" stroke-width="2.6" fill="none" stroke-linejoin="miter"/><path d="M1079.5 415.0 L1092.0 415.0 L1092.0 456.0" stroke="#ff0000" stroke-width="2.6" fill="none" stroke-linejoin="miter"/><rect x="559.5" y="283.5" width="16.0" height="16.0" stroke="#00ff00" stroke-width="1" fill="none"/><rect x="561.5" y="285.5" width="12.0" height="12.0" stroke="#00ff00" stroke-width="1" fill="none"/><path d="M565.5 285.5V297.5M561.5 289.5H573.5M569.5 285.5V297.5M561.5 293.5H573.5" stroke="#00ff00" stroke-width="1"/><rect x="673.5" y="283.5" width="16.0" height="16.0" stroke="#00ff00" stroke-width="1" fill="none"/><rect x="675.5" y="285.5" width="12.0" height="12.0" stroke="#00ff00" stroke-width="1" fill="none"/><path d="M679.5 285.5V297.5M675.5 289.5H687.5M683.5 285.5V297.5M675.5 293.5H687.5" stroke="#00ff00" stroke-width="1"/><rect x="739.5" y="263.5" width="16.0" height="16.0" stroke="#00ff00" stroke-width="1" fill="none"/><rect x="741.5" y="265.5" width="12.0" height="12.0" stroke="#00ff00" stroke-width="1" fill="none"/><path d="M745.5 265.5V277.5M741.5 269.5H753.5M749.5 265.5V277.5M741.5 273.5H753.5" stroke="#00ff00" stroke-width="1"/><rect x="815.5" y="263.5" width="16.0" height="16.0" stroke="#00ff00" stroke-width="1" fill="none"/><rect x="817.5" y="265.5" width="12.0" height="12.0" stroke="#00ff00" stroke-width="1" fill="none"/><path d="M821.5 265.5V277.5M817.5 269.5H829.5M825.5 265.5V277.5M817.5 273.5H829.5" stroke="#00ff00" stroke-width="1"/><rect x="739.5" y="317.5" width="16.0" height="16.0" stroke="#00ff00" stroke-width="1" fill="none"/><rect x="741.5" y="319.5" width="12.0" height="12.0" stroke="#00ff00" stroke-width="1" fill="none"/><path d="M745.5 319.5V331.5M741.5 323.5H753.5M749.5 319.5V331.5M741.5 327.5H753.5" stroke="#00ff00" stroke-width="1"/><rect x="815.5" y="317.5" width="16.0" height="16.0" stroke="#00ff00" stroke-width="1" fill="none"/><rect x="817.5" y="319.5" width="12.0" height="12.0" stroke="#00ff00" stroke-width="1" fill="none"/><path d="M821.5 319.5V331.5M817.5 323.5H829.5M825.5 319.5V331.5M817.5 327.5H829.5" stroke="#00ff00" stroke-width="1"/><rect x="910.5" y="288.5" width="16.0" height="16.0" stroke="#00ff00" stroke-width="1" fill="none"/><rect x="912.5" y="290.5" width="12.0" height="12.0" stroke="#00ff00" stroke-width="1" fill="none"/><path d="M916.5 290.5V302.5M912.5 294.5H924.5M920.5 290.5V302.5M912.5 298.5H924.5" stroke="#00ff00" stroke-width="1"/><rect x="994.5" y="288.5" width="16.0" height="16.0" stroke="#00ff00" stroke-width="1" fill="none"/><rect x="996.5" y="290.5" width="12.0" height="12.0" stroke="#00ff00" stroke-width="1" fill="none"/><path d="M1000.5 290.5V302.5M996.5 294.5H1008.5M1004.5 290.5V302.5M996.5 298.5H1008.5" stroke="#00ff00" stroke-width="1"/><rect x="1091.5" y="288.5" width="16.0" height="16.0" stroke="#00ff00" stroke-width="1" fill="none"/><rect x="1093.5" y="290.5" width="12.0" height="12.0" stroke="#00ff00" stroke-width="1" fill="none"/><path d="M1097.5 290.5V302.5M1093.5 294.5H1105.5M1101.5 290.5V302.5M1093.5 298.5H1105.5" stroke="#00ff00" stroke-width="1"/><rect x="544.5" y="379.5" width="16.0" height="16.0" stroke="#00ff00" stroke-width="1" fill="none"/><rect x="546.5" y="381.5" width="12.0" height="12.0" stroke="#00ff00" stroke-width="1" fill="none"/><path d="M550.5 381.5V393.5M546.5 385.5H558.5M554.5 381.5V393.5M546.5 389.5H558.5" stroke="#00ff00" stroke-width="1"/><rect x="564.5" y="461.5" width="16.0" height="16.0" stroke="#00ff00" stroke-width="1" fill="none"/><rect x="566.5" y="463.5" width="12.0" height="12.0" stroke="#00ff00" stroke-width="1" fill="none"/><path d="M570.5 463.5V475.5M566.5 467.5H578.5M574.5 463.5V475.5M566.5 471.5H578.5" stroke="#00ff00" stroke-width="1"/><rect x="717.5" y="428.5" width="16.0" height="16.0" stroke="#00ff00" stroke-width="1" fill="none"/><rect x="719.5" y="430.5" width="12.0" height="12.0" stroke="#00ff00" stroke-width="1" fill="none"/><path d="M723.5 430.5V442.5M719.5 434.5H731.5M727.5 430.5V442.5M719.5 438.5H731.5" stroke="#00ff00" stroke-width="1"/><rect x="788.5" y="428.5" width="16.0" height="16.0" stroke="#00ff00" stroke-width="1" fill="none"/><rect x="790.5" y="430.5" width="12.0" height="12.0" stroke="#00ff00" stroke-width="1" fill="none"/><path d="M794.5 430.5V442.5M790.5 434.5H802.5M798.5 430.5V442.5M790.5 438.5H802.5" stroke="#00ff00" stroke-width="1"/><rect x="717.5" y="481.5" width="16.0" height="16.0" stroke="#00ff00" stroke-width="1" fill="none"/><rect x="719.5" y="483.5" width="12.0" height="12.0" stroke="#00ff00" stroke-width="1" fill="none"/><path d="M723.5 483.5V495.5M719.5 487.5H731.5M727.5 483.5V495.5M719.5 491.5H731.5" stroke="#00ff00" stroke-width="1"/><rect x="788.5" y="481.5" width="16.0" height="16.0" stroke="#00ff00" stroke-width="1" fill="none"/><rect x="790.5" y="483.5" width="12.0" height="12.0" stroke="#00ff00" stroke-width="1" fill="none"/><path d="M794.5 483.5V495.5M790.5 487.5H802.5M798.5 483.5V495.5M790.5 491.5H802.5" stroke="#00ff00" stroke-width="1"/><rect x="853.5" y="477.5" width="16.0" height="16.0" stroke="#00ff00" stroke-width="1" fill="none"/><rect x="855.5" y="479.5" width="12.0" height="12.0" stroke="#00ff00" stroke-width="1" fill="none"/><path d="M859.5 479.5V491.5M855.5 483.5H867.5M863.5 479.5V491.5M855.5 487.5H867.5" stroke="#00ff00" stroke-width="1"/><rect x="908.5" y="477.5" width="16.0" height="16.0" stroke="#00ff00" stroke-width="1" fill="none"/><rect x="910.5" y="479.5" width="12.0" height="12.0" stroke="#00ff00" stroke-width="1" fill="none"/><path d="M914.5 479.5V491.5M910.5 483.5H922.5M918.5 479.5V491.5M910.5 487.5H922.5" stroke="#00ff00" stroke-width="1"/><rect x="983.5" y="456.5" width="16.0" height="16.0" stroke="#00ff00" stroke-width="1" fill="none"/><rect x="985.5" y="458.5" width="12.0" height="12.0" stroke="#00ff00" stroke-width="1" fill="none"/><path d="M989.5 458.5V470.5M985.5 462.5H997.5M993.5 458.5V470.5M985.5 466.5H997.5" stroke="#00ff00" stroke-width="1"/><rect x="1083.5" y="456.5" width="16.0" height="16.0" stroke="#00ff00" stroke-width="1" fill="none"/><rect x="1085.5" y="458.5" width="12.0" height="12.0" stroke="#00ff00" stroke-width="1" fill="none"/><path d="M1089.5 458.5V470.5M1085.5 462.5H1097.5M1093.5 458.5V470.5M1085.5 466.5H1097.5" stroke="#00ff00" stroke-width="1"/><circle cx="577.5" cy="345.0" r="3.8" fill="#00ff00"/><circle cx="636.0" cy="258.0" r="3.8" fill="#00ff00"/><circle cx="648.0" cy="343.5" r="3.8" fill="#00ff00"/><circle cx="658.0" cy="275.0" r="3.8" fill="#00ff00"/><circle cx="869.7" cy="355.4" r="3.8" fill="#00ff00"/><circle cx="932.0" cy="344.0" r="3.8" fill="#00ff00"/><circle cx="993.0" cy="345.0" r="3.8" fill="#00ff00"/><circle cx="1104.0" cy="345.5" r="3.8" fill="#00ff00"/><circle cx="576.4" cy="376.5" r="3.8" fill="#00ff00"/><circle cx="577.5" cy="415.5" r="3.8" fill="#00ff00"/><circle cx="659.0" cy="415.0" r="3.8" fill="#00ff00"/><circle cx="829.0" cy="454.0" r="3.8" fill="#00ff00"/><circle cx="893.0" cy="448.0" r="3.8" fill="#00ff00"/><circle cx="881.0" cy="513.0" r="3.8" fill="#00ff00"/><circle cx="986.7" cy="414.4" r="3.8" fill="#00ff00"/><circle cx="1079.5" cy="415.0" r="3.8" fill="#00ff00"/><path d="M606.5 381.0 L610.0 377.0 L613.5 381.0 L610.0 385.0Z" fill="#00ff00"/><path d="M610.0 376.0V386.0" stroke="#00ff00" stroke-width="1.2"/><path d="M661.5 381.0 L665.0 377.0 L668.5 381.0 L665.0 385.0Z" fill="#00ff00"/><path d="M665.0 376.0V386.0" stroke="#00ff00" stroke-width="1.2"/><path d="M716.9 381.0 L720.4 377.0 L723.9 381.0 L720.4 385.0Z" fill="#00ff00"/><path d="M720.4 376.0V386.0" stroke="#00ff00" stroke-width="1.2"/><path d="M771.8 381.0 L775.3 377.0 L778.8 381.0 L775.3 385.0Z" fill="#00ff00"/><path d="M775.3 376.0V386.0" stroke="#00ff00" stroke-width="1.2"/><path d="M826.5 381.0 L830.0 377.0 L833.5 381.0 L830.0 385.0Z" fill="#00ff00"/><path d="M830.0 376.0V386.0" stroke="#00ff00" stroke-width="1.2"/><path d="M882.0 381.0 L885.5 377.0 L889.0 381.0 L885.5 385.0Z" fill="#00ff00"/><path d="M885.5 376.0V386.0" stroke="#00ff00" stroke-width="1.2"/><path d="M937.2 381.0 L940.7 377.0 L944.2 381.0 L940.7 385.0Z" fill="#00ff00"/><path d="M940.7 376.0V386.0" stroke="#00ff00" stroke-width="1.2"/><path d="M992.1 381.0 L995.6 377.0 L999.1 381.0 L995.6 385.0Z" fill="#00ff00"/><path d="M995.6 376.0V386.0" stroke="#00ff00" stroke-width="1.2"/><path d="M1047.2 381.0 L1050.7 377.0 L1054.2 381.0 L1050.7 385.0Z" fill="#00ff00"/><path d="M1050.7 376.0V386.0" stroke="#00ff00" stroke-width="1.2"/><path d="M1101.8 381.0 L1105.3 377.0 L1108.8 381.0 L1105.3 385.0Z" fill="#00ff00"/><path d="M1105.3 376.0V386.0" stroke="#00ff00" stroke-width="1.2"/><path d="M632.5 287.4 L636.0 283.4 L639.5 287.4 L636.0 291.4Z" fill="#00ff00"/><path d="M636.0 282.4V292.4" stroke="#00ff00" stroke-width="1.2"/><path d="M632.5 315.5 L636.0 311.5 L639.5 315.5 L636.0 319.5Z" fill="#00ff00"/><path d="M636.0 310.5V320.5" stroke="#00ff00" stroke-width="1.2"/><path d="M632.5 343.7 L636.0 339.7 L639.5 343.7 L636.0 347.7Z" fill="#00ff00"/><path d="M636.0 338.7V348.7" stroke="#00ff00" stroke-width="1.2"/><path d="M843.0 475.0 L843.0 500.0" stroke="#00ff00" stroke-width="1.5" fill="none" /><path d="M843 478 H848" stroke="#00ff00" stroke-width="2.5"/><path d="M843 487 H848" stroke="#00ff00" stroke-width="2.5"/><path d="M843 497 H848" stroke="#00ff00" stroke-width="2.5"/><path d="M577.0 345.0 L588.0 335.0" stroke="#00ff00" stroke-width="0.9" fill="none" /><path d="M648.0 343.0 L638.0 331.0" stroke="#00ff00" stroke-width="0.9" fill="none" /><path d="M658.0 275.0 L672.0 292.0" stroke="#00ff00" stroke-width="0.9" fill="none" /><path d="M932.0 344.0 L942.0 333.0" stroke="#00ff00" stroke-width="0.9" fill="none" /><path d="M993.0 345.0 L1003.0 336.0" stroke="#00ff00" stroke-width="0.9" fill="none" /><path d="M1104.0 345.0 L1116.0 335.0" stroke="#00ff00" stroke-width="0.9" fill="none" /><path d="M576.0 376.0 L568.0 366.0" stroke="#00ff00" stroke-width="0.9" fill="none" /><path d="M578.0 415.0 L567.0 423.0" stroke="#00ff00" stroke-width="0.9" fill="none" /><path d="M829.0 454.0 L818.0 443.0" stroke="#00ff00" stroke-width="0.9" fill="none" /><path d="M893.0 448.0 L904.0 438.0" stroke="#00ff00" stroke-width="0.9" fill="none" /><path d="M881.0 513.0 L890.0 503.0" stroke="#00ff00" stroke-width="0.9" fill="none" /><path d="M987.0 414.0 L975.0 424.0" stroke="#00ff00" stroke-width="0.9" fill="none" /><path d="M1079.0 415.0 L1068.0 424.0" stroke="#00ff00" stroke-width="0.9" fill="none" /><path d="M870.0 355.0 L863.0 365.0" stroke="#00ff00" stroke-width="0.9" fill="none" /><text x="542" y="345" font-size="10" fill="#ffffff" font-weight="bold" font-family='"Liberation Sans",sans-serif' textLength="21" lengthAdjust="spacingAndGlyphs">洽谈室</text><text x="526" y="376" font-size="10" fill="#ffffff" font-weight="bold" font-family='"Liberation Sans",sans-serif' textLength="21" lengthAdjust="spacingAndGlyphs">准备室</text><text x="807" y="292" font-size="10" fill="#ffffff" font-weight="bold" font-family='"Liberation Sans",sans-serif' textLength="21" lengthAdjust="spacingAndGlyphs">护士站</text><text x="806" y="345" font-size="10" fill="#ffffff" font-weight="bold" font-family='"Liberation Sans",sans-serif' textLength="29" lengthAdjust="spacingAndGlyphs">前台操作</text><text x="895" y="288" font-size="10" fill="#ffffff" font-weight="bold" font-family='"Liberation Sans",sans-serif' textLength="14" lengthAdjust="spacingAndGlyphs">药房</text><text x="1087" y="277" font-size="10" fill="#ffffff" font-weight="bold" font-family='"Liberation Sans",sans-serif' textLength="21" lengthAdjust="spacingAndGlyphs">会客室</text><text x="542" y="447" font-size="10" fill="#ffffff" font-weight="bold" font-family='"Liberation Sans",sans-serif' textLength="21" lengthAdjust="spacingAndGlyphs">洽谈室</text><text x="624" y="509" font-size="10" fill="#ffffff" font-weight="bold" font-family='"Liberation Sans",sans-serif' textLength="20" lengthAdjust="spacingAndGlyphs">办公室</text><text x="898" y="473" font-size="10" fill="#ffffff" font-weight="bold" font-family='"Liberation Sans",sans-serif' textLength="14" lengthAdjust="spacingAndGlyphs">门厅</text><text x="987" y="487" font-size="10" fill="#ffffff" font-weight="bold" font-family='"Liberation Sans",sans-serif' textLength="14" lengthAdjust="spacingAndGlyphs">餐厅</text><text x="1087" y="486" font-size="10" fill="#ffffff" font-weight="bold" font-family='"Liberation Sans",sans-serif' textLength="21" lengthAdjust="spacingAndGlyphs">会客室</text><text x="645" y="374" font-size="11" fill="#ffffff" font-weight="normal" font-family='"Liberation Sans",sans-serif' textLength="5" lengthAdjust="spacingAndGlyphs">2</text><text x="758" y="429" font-size="11" fill="#ffffff" font-weight="normal" font-family='"Liberation Sans",sans-serif' textLength="5" lengthAdjust="spacingAndGlyphs">2</text><path d="M643.0 386.0 L653.0 376.0" stroke="#ffffff" stroke-width="1" fill="none" /><path d="M756.0 441.0 L766.0 431.0" stroke="#ffffff" stroke-width="1" fill="none" /><path d="M800.0 376.0 L810.0 385.0" stroke="#ffffff" stroke-width="1" fill="none" /><path d="M805.0 381.0 L823.0 401.5 L1051.0 401.5" stroke="#ffffff" stroke-width="1" fill="none" /><text x="906" y="400.5" font-size="14" fill="#ffffff" font-weight="normal" font-family='"Liberation Sans",sans-serif' textLength="145" lengthAdjust="spacingAndGlyphs">wl6-BV-2x1.5-PC20-ACC</text><g stroke="#ffffff" stroke-width="1" fill="none"><path d="M359.5 512 V595.5 H442"/><path d="M356 524 L359.5 512 L363 524"/><path d="M432 592 L442 595.5 L432 599"/><rect x="354.5" y="590.5" width="10" height="10"/><path d="M355 491 L361 498 L367 491 M361 498 V506"/><path d="M450 589 L462 602 M462 589 L450 602"/></g></g></svg><!--/DRAW--></div>
<div class="a" style="left:339px;top:128px;width:992px;height:1px;background:#9da1a6"></div>
<div id="laytab" class="a">
  <svg class="a" style="left:0;top:0" width="200" height="15"><g fill="#8a929a"><rect x="6" y="4" width="1.5" height="8"/><path d="M14 4 L8 8 L14 12Z"/><path d="M30 4 L24 8 L30 12Z"/><path d="M38 4 L44 8 L38 12Z"/><path d="M54 4 L60 8 L54 12Z"/><rect x="60" y="4" width="1.5" height="8"/></g>
  <path d="M66 0 L73 15 L105 15 L112 0" fill="#212830" stroke="#e8e8e8" stroke-width="1"/><path d="M112 0 L105 15 M158 0 L151 15" stroke="#e8e8e8" stroke-width="1" fill="none"/></svg>
  <div class="t" style="left:77px;top:1px;font-size:13px;color:#fff;font-weight:bold">模型</div>
  <div class="t" style="left:116px;top:1px;font-size:13px;color:#d0d8e0">布局1</div>
</div>
<div id="rtb" class="a">
  <div class="a" style="left:2px;top:0;width:1px;height:528px;background:#dcdcdc"></div><div class="a" style="left:2px;top:0;width:26px;height:1px;background:#dcdcdc"></div>
  <svg class="a" style="left:3px;top:0" width="25" height="528">
    <g stroke="#4a90e2" stroke-width="1.5"><path d="M3 3.5H22M3 6.5H22"/><path d="M3 417.5H22M3 420.5H22"/></g>
    <g transform="translate(0,0)">
      <path d="M6 27 L15 16 L20 21 L11 31 Z" fill="#fff" stroke="#333" stroke-width="1.3"/><path d="M13 18 L18 23 L16 25 L11 20Z" fill="#3d78c0"/>
      <rect x="4.5" y="38.5" width="5" height="5" fill="none" stroke="#333"/><path d="M13 40 Q18 40 17 48" stroke="#3d78c0" stroke-width="2" fill="none"/><path d="M14 46 L17 50 L20 46" stroke="#3d78c0" stroke-width="1.5" fill="none"/><path d="M10 49 V53 H12 M20 49 V53 H17" stroke="#7a2a7a" stroke-width="1.2" fill="none"/>
      <path d="M11 58 V73" stroke="#333"/><path d="M9 72 L4 72 L9 61Z" fill="none" stroke="#333"/><path d="M13 72 L19 72 L13 61Z" fill="#7a3a7a"/>
      <path d="M5 94 C3 86 8 82 12 86 C14 80 20 82 19 88 C22 90 20 95 17 94 Z" fill="none" stroke="#333" stroke-width="1.3"/><path d="M7 91 C6 88 10 86 12 89 L17 91" stroke="#8a3a8a" stroke-width="1.3" fill="none"/>
      <rect x="5" y="103" width="7" height="7" fill="#7a3a7a"/><rect x="14" y="103" width="7" height="7" fill="#8a7a8a"/><rect x="5" y="112" width="7" height="7" fill="#8a7a8a"/><rect x="14" y="112" width="7" height="7" fill="#8a7a8a"/>
      <path d="M13 124 V140 M5 132 H21 M10 127 L13 124 L16 127 M10 137 L13 140 L16 137 M8 129 L5 132 L8 135 M18 129 L21 132 L18 135" stroke="#333" stroke-width="1.3" fill="none"/>
      <path d="M17 148 A7 7 0 1 1 9 148" stroke="#333" stroke-width="1.3" fill="none"/><path d="M15 144 L18 148 L14 151" stroke="#333" stroke-width="1.3" fill="none"/>
      <path d="M6 167 V182 H20 M6 167 H20 V173" stroke="#333" stroke-width="1.2" fill="none" stroke-dasharray="15 2"/><path d="M13 175 L16 178 M13 178 L16 175" stroke="#7a3a7a" stroke-width="1.2"/>
      <rect x="6.5" y="190.5" width="13" height="13" fill="none" stroke="#333" stroke-dasharray="2 1"/><path d="M13 201 V194 M10 197 L13 194 L16 197" stroke="#7a2a7a" stroke-width="1.8" fill="none"/>
      <path d="M4 228 L8 228 M10 228 L17 216 M17 222 L21 222" stroke="#7a3a7a" stroke-width="1.2" fill="none"/>
      <path d="M4 248 L7 248 M9 248 L12 248 M14 248 L20 237" stroke="#7a3a7a" stroke-width="1.2" fill="none"/>
      <rect x="6.5" y="259.5" width="13" height="12" fill="none" stroke="#333"/><rect x="8" y="258" width="2" height="2" fill="#3d78c0"/><rect x="16" y="258" width="2" height="2" fill="#3d78c0"/>
      <rect x="6.5" y="279.5" width="13" height="12" fill="none" stroke="#333"/><rect x="8" y="278" width="2" height="2" fill="#3d78c0"/><rect x="16" y="278" width="2" height="2" fill="#3d78c0"/>
      <path d="M5 312 V302 M21 312 V302 M5 302 L11 302 M15 302 L21 302" stroke="#333" fill="none"/><path d="M6 302 L11 305 M20 302 L15 305" stroke="#2a9a7a" stroke-width="1.5"/>
      <path d="M5 336 H20 V323 M5 336 L18 325" stroke="#333" fill="none"/><path d="M7 333 L17 324" stroke="#7a3a7a" stroke-width="1.5"/>
      <path d="M5 359 H20 V346" stroke="#333" fill="none"/><path d="M7 358 Q7 348 18 347" stroke="#7a3a7a" stroke-width="1.5" fill="none"/>
      <circle cx="11" cy="376" r="7" fill="#3d6aa0"/><path d="M16 369 L19 366" stroke="#e8b020" stroke-width="2"/>
      <rect x="6" y="389" width="11" height="12" fill="#cfe0f5" stroke="#3d78c0"/><path d="M8 395 h7 M11 391 v8" stroke="#3d78c0"/><path d="M14 402 L21 393" stroke="#444" stroke-width="2.5"/>
      <rect x="6.5" y="428.5" width="9" height="9" fill="none" stroke="#333"/><rect x="10" y="432" width="10" height="10" fill="#f5b400"/>
      <rect x="6.5" y="450.5" width="9" height="9" fill="none" stroke="#333"/><rect x="11" y="455" width="7" height="7" fill="#f5b400"/><rect x="13.5" y="457.5" width="8" height="8" fill="none" stroke="#333"/>
      <rect x="6" y="472" width="10" height="10" fill="#f5b400"/><rect x="12.5" y="478.5" width="9" height="9" fill="#fff" stroke="#333"/>
      <rect x="6" y="494" width="10" height="10" fill="#f5b400"/><rect x="12.5" y="500.5" width="9" height="9" fill="#fff" stroke="#333"/>
    </g>
  </svg>
</div>
<div class="a" style="left:1187px;top:88px;width:104px;height:25px;border:1px solid #2a8ad8;border-radius:3px;background:linear-gradient(#e8f4fd,#b8dcf6);overflow:hidden">
  <div class="a" style="left:0;top:0;width:29px;height:23px;background:#2a8ee0"></div>
  <svg class="a" style="left:2px;top:2px" width="26" height="20"><circle cx="7" cy="12" r="4.5" fill="none" stroke="#fff" stroke-width="2.6"/><circle cx="12" cy="6" r="4" fill="none" stroke="#fff" stroke-width="2.6"/><path d="M15 7 Q20 8 21 14" stroke="#fff" stroke-width="2" fill="none"/><circle cx="21" cy="17" r="1.5" fill="#fff"/></svg>
  <div class="t" style="left:41px;top:5px;font-size:13px;color:#4a6078">拖拽上传</div>
</div>
<div id="cmd" class="a">
  <div class="a" style="left:14px;top:4px;width:1336px;height:64px;background:#fff"></div>
  <div class="a" style="left:0;top:0;width:1353px;height:2px;background:#fbfbfb"></div><div class="a" style="left:0;top:2px;width:1353px;height:1px;background:#a8a8a8"></div><div class="a" style="left:4px;top:12px;width:10px;height:11px;background:#fff"></div>
  <div class="t" style="left:6px;top:9px;font-size:11px;color:#333;font-weight:bold">✕</div>
  <div class="a" style="left:6px;top:26px;width:1px;height:37px;background:#a8a8a8"></div>
  <div class="a" style="left:12px;top:26px;width:1px;height:37px;background:#a8a8a8"></div>
  <div class="cl" style="left:19px;top:9px"><b>请选择要统计的内容后按确定</b><i>[</i><b>选取闭合</b><i>PLINE(P)]&lt;</i><b>整张图</b><i>&gt;:</i><b>取消</b></div>
  <div class="cl" style="left:19px;top:24px"><b>命令</b><i>:  cltj</i></div>
  <div class="a" style="left:18px;top:48px;width:1312px;height:1px;background:#9a9a9a"></div>
  <div class="cl" style="left:19px;top:50px"><b>请选择要统计的内容后按确定</b><i>[</i><b>选取闭合</b><i>PLINE(P)]&lt;</i><b>整张图</b><i>&gt;:</i></div>
  <div class="a" style="left:1328px;top:10px;width:18px;height:38px;border:1px solid #9a9a9a;background:#fff"><div class="a" style="left:0;top:3px;width:14px;height:1px;background:#9a9a9a"></div><div class="a" style="left:0;top:19px;width:14px;height:1px;background:#9a9a9a"></div><div class="a" style="left:3px;top:25px;border-left:4px solid transparent;border-right:4px solid transparent;border-top:5px solid #222"></div></div>
  <div class="a" style="left:1264px;top:49px;width:64px;height:17px;border:1px solid #9a9a9a;background:#fff"><div class="a" style="left:15px;top:0;width:1px;height:14px;background:#9a9a9a"></div><div class="a" style="left:31px;top:0;width:15px;height:14px;background:#cdcdcd"></div><div class="a" style="left:46px;top:0;width:1px;height:14px;background:#9a9a9a"></div><div class="a" style="left:4px;top:3px;border-top:4px solid transparent;border-bottom:4px solid transparent;border-right:5px solid #222"></div><div class="a" style="left:51px;top:3px;border-top:4px solid transparent;border-bottom:4px solid transparent;border-left:5px solid #222"></div></div>
</div>
<div id="status" class="a">
  <div class="st" style="left:7px">比例</div><div class="st" style="left:36px;font-size:12px;letter-spacing:0.2px">1:100</div>
  <div class="a" style="left:70px;top:11px;border-left:4px solid transparent;border-right:4px solid transparent;border-top:5px solid #111"></div>
  <div class="a" style="left:87px;top:3px;width:76px;height:19px;border:1px solid #a0a0a0;background:#f5f5f5"></div>
  <div class="st" style="left:89px">电气标注文字</div>
  <div class="st" style="left:168px;font-family:'Liberation Mono',monospace;font-size:10px;top:8px">59229, 15889, 0</div>
  <svg class="a" style="left:420px;top:3px" width="250" height="19"><g transform="translate(-424,-704)">
    <g fill="none" stroke="#222" stroke-width="1.2"><path d="M427.5 706.5H440.5V719.5H427.5Z M431.8 706.5V719.5 M436.2 706.5V719.5 M427.5 710.8H440.5 M427.5 715.2H440.5"/></g>
    <path d="M440.5 706 V720.5 H427" stroke="#3a6fb5" stroke-width="2" fill="none"/>
    <g fill="none"><path d="M451.5 706.5H466.5V720.5H451.5Z" stroke="#222" stroke-width="1.2"/><path d="M456.5 707V720M461.5 707V720M452 711H466M452 716H466" stroke="#3a6fb5" stroke-width="1.2"/></g>
    <path d="M475.5 706V720.5H491" stroke="#333" stroke-width="1.2" fill="none"/><rect x="475.5" y="716.5" width="4" height="4" fill="none" stroke="#3a6fb5" stroke-width="1.2"/>
    <rect x="497.5" y="705.5" width="19" height="17" fill="none" stroke="#aaa"/><circle cx="505.5" cy="714" r="5.8" fill="none" stroke="#333" stroke-width="1.2"/><path d="M505.5 714L513 707M505.5 714H514" stroke="#3a6fb5" stroke-width="1.2"/>
    <rect x="521.5" y="705.5" width="19" height="17" fill="none" stroke="#aaa"/><rect x="523.5" y="706.5" width="15" height="14" fill="none" stroke="#333" stroke-width="1.5"/><rect x="523.5" y="706.5" width="4" height="4" fill="#f0f0f0" stroke="#e04a2a" stroke-width="1.2"/>
    <rect x="545.5" y="705.5" width="19" height="17" fill="none" stroke="#aaa"/><path d="M547 719.5L560 707M547 719.5H563" stroke="#333" stroke-width="1.2" fill="none"/><rect x="553.5" y="710.5" width="3" height="3" fill="none" stroke="#3a6fb5" stroke-width="1.2"/>
    <rect x="569.5" y="705.5" width="19" height="17" fill="none" stroke="#aaa"/><path d="M571 713.5H580M575.5 709V718" stroke="#333" stroke-width="1.2"/><rect x="578" y="717" width="8.5" height="3.5" fill="none" stroke="#3a6fb5" stroke-width="1.2"/>
    <path d="M596 709.5H610" stroke="#333" stroke-width="1"/><path d="M596 713.5H610M596 717.5H610" stroke="#333" stroke-width="2"/>
    <rect x="617.5" y="705.5" width="19" height="17" fill="none" stroke="#aaa"/><path d="M620 709H625M622.5 706.5V711.5" stroke="#333" stroke-width="1.1"/><path d="M624 718V711H630" stroke="#333" stroke-width="1.1" fill="none"/><rect x="627.5" y="714.5" width="7" height="7" fill="#fff" stroke="#3a6fb5" stroke-width="1.2"/>
    <rect x="641.5" y="705.5" width="19" height="17" fill="none" stroke="#aaa"/><path d="M646 707.5H655V714" stroke="#333" fill="none"/><path d="M649 707V714M652 707V714M646 710.5H655" stroke="#888" stroke-width="0.8"/><rect x="643.5" y="709.5" width="8" height="7" fill="#fff" stroke="#3a6fb5" stroke-dasharray="1.5 1"/><rect x="646" y="711.5" width="3" height="3" fill="#3a6fb5"/><path d="M658 715V718H652M654 716L651.5 718L654 720" stroke="#4aa06a" stroke-width="1.6" fill="none"/>
  </g></svg>
  <div class="a" style="left:681px;top:3px;width:28px;height:19px;border:1px solid #a0a0a0;background:#f5f5f5"></div>
  <div class="st" style="left:683px">编组</div>
  <div class="st" style="left:714px">基线</div>
  <div class="st" style="left:747px">填充</div>
  <div class="st" style="left:779px">加粗</div>
  <div class="st" style="left:810px">动态标注</div>
  <svg class="a" style="left:1260px;top:3px" width="95" height="19"><g transform="translate(-1264,-704)">
    <g transform="translate(1275.5,713.5)"><path d="M-1.6 -7 H1.6 L2 -4.6 L4 -5.8 L6.2 -3.6 L4.9 -1.7 L7 -1.5 V1.6 L4.8 2 L6 4 L3.8 6.2 L1.8 4.9 L1.6 7 H-1.6 L-2 4.8 L-4 6 L-6.2 3.8 L-4.9 1.8 L-7 1.6 V-1.6 L-4.8 -2 L-6 -4 L-3.8 -6.2 L-1.8 -4.9Z" fill="#3d78c0"/><circle r="2.3" fill="#f0f0f0"/></g>
    <path d="M1286 712 H1294.5 L1290.2 717Z" fill="#111"/>
    <rect x="1302.5" y="705.5" width="13" height="17" fill="#f7f7f7" stroke="#b0b0b0"/><path d="M1305 712 H1313 L1309 716.5Z" fill="#1a8a1a"/>
    <g stroke="#333" stroke-width="1.2" fill="none"><path d="M1322.5 711V707.5H1326 M1322.5 707.5L1326.5 711.5 M1336.5 711V707.5H1333 M1336.5 707.5L1332.5 711.5 M1322.5 716.5V720H1326 M1322.5 720L1326.5 716 M1336.5 716.5V720H1333 M1336.5 720L1332.5 716"/></g>
    <g fill="#b8b8b8"><rect x="1352" y="711" width="2" height="2"/><rect x="1349" y="714" width="2" height="2"/><rect x="1352" y="714" width="2" height="2"/><rect x="1346" y="717" width="2" height="2"/><rect x="1349" y="717" width="2" height="2"/><rect x="1352" y="717" width="2" height="2"/></g>
  </g></svg>
</div>
<div id="dlg" class="a">
  <div class="a" style="left:5px;top:5px;width:16px;height:16px;background:#2f6fc4;border-radius:2px"><svg width="16" height="16" style="position:absolute;left:0;top:0"><path d="M6.5 4 L4 11.5" stroke="#fff" stroke-width="1.2" fill="none"/><circle cx="6.5" cy="4" r="1.5" fill="#fff"/><circle cx="4" cy="11.5" r="1.5" fill="#fff"/><path d="M7 12 L9.5 8 L11 11.5 L13.5 7.5" stroke="#fff" stroke-width="1.3" fill="none"/></svg></div>
  <div class="t" style="left:28px;top:5px;font-size:16px;color:#e6e6e6">材料统计</div>
  <svg class="a" style="left:422px;top:10px" width="12" height="12"><path d="M1.5 1.5 L10.5 10.5 M10.5 1.5 L1.5 10.5" stroke="#cdd3da" stroke-width="1.8"/></svg>
  <div id="dlgbody" class="a">
  <div class="grp" style="left:7px;top:11px;width:94px;height:296px"></div>
  <div class="lg" style="left:12px;top:4px">统计内容</div>
  <div class="cb on" style="left:20px;top:25.1px"></div><div class="lb" style="left:36px;top:24.6px">采暖水管</div>
  <div class="cb on" style="left:20px;top:46.0px"></div><div class="lb" style="left:36px;top:45.5px">地热盘管</div>
  <div class="cb on" style="left:20px;top:66.8px"></div><div class="lb" style="left:36px;top:66.3px">采暖阀件</div>
  <div class="cb on" style="left:20px;top:87.7px"></div><div class="lb" style="left:36px;top:87.2px">采暖设备</div>
  <div class="cb on" style="left:20px;top:108.6px"></div><div class="lb" style="left:36px;top:108.1px">空调水管</div>
  <div class="cb on" style="left:20px;top:129.5px"></div><div class="lb" style="left:36px;top:129.0px">空调风管</div>
  <div class="cb on" style="left:20px;top:150.3px"></div><div class="lb" style="left:36px;top:149.8px">空调水阀</div>
  <div class="cb on" style="left:20px;top:171.2px"></div><div class="lb" style="left:36px;top:170.7px">空调风阀</div>
  <div class="cb on" style="left:20px;top:192.1px"></div><div class="lb" style="left:36px;top:191.6px">空调设备</div>
  <div class="cb on" style="left:20px;top:212.9px"></div><div class="lb" style="left:36px;top:212.4px">连接构件</div>
  <div class="cb on" style="left:20px;top:233.8px"></div><div class="lb" style="left:36px;top:233.3px">多联机</div>
  <div class="cb " style="left:20px;top:254.7px"></div><div class="lb" style="left:36px;top:254.2px">其它</div>
  <div class="a" style="left:35px;top:24px;width:51px;height:16px;border:1px dotted #333"></div>
  <div class="btn" style="left:16px;top:280px;width:73px;height:19px">全选</div>
  <div class="grp" style="left:110px;top:11px;width:323px;height:145px"></div>
  <div class="lg" style="left:117px;top:4px">统计范围</div>
  <div class="a" style="left:120px;top:20px;width:303px;height:129px;border:1px solid #000;background:#fff">
    <div class="a" style="left:0;top:0;width:301px;height:16px;background:#f0f0f0;border-bottom:2px solid #a0a0a0"></div>
    <div class="a" style="left:15px;top:0;width:2px;height:16px;background:#888"></div>
    <div class="a" style="left:235px;top:0;width:2px;height:16px;background:#888"></div>
    <div class="a" style="left:299px;top:0;width:2px;height:16px;background:#888"></div>
    <div class="lb" style="left:18px;top:2px">所选文件</div>
    <div class="lb" style="left:238px;top:2px">计算数量</div>
  </div>
  <div class="btn" style="left:112px;top:166px;width:73px;height:18px">当前框选</div>
  <div class="btn" style="left:234px;top:166px;width:73px;height:18px">添加文件</div>
  <div class="btn" style="left:357px;top:166px;width:73px;height:18px">删除项</div>
  <div class="grp" style="left:110px;top:198px;width:323px;height:109px"></div>
  <div class="lg" style="left:117px;top:191px">表格设置</div>
  <div class="lb" style="left:119px;top:210px">文字样式</div>
  <div class="inp" style="left:173px;top:207px;width:90px;height:20px;font-size:10px;letter-spacing:-0.3px">STANDARD<div class="a" style="right:16px;top:3px;width:1px;height:12px;background:#555"></div><div class="a" style="right:3px;top:7px;border-left:5px solid transparent;border-right:5px solid transparent;border-top:5px solid #333"></div></div>
  <div class="lb" style="left:281px;top:210px">文字高度</div>
  <div class="inp" style="left:341px;top:207px;width:80px;height:20px;line-height:14px">3</div>
  <div class="lb" style="left:119px;top:238px">统计精度</div>
  <div class="inp" style="left:173px;top:235px;width:90px;height:19px">0<div class="a" style="right:16px;top:3px;width:1px;height:12px;background:#555"></div><div class="a" style="right:3px;top:7px;border-left:5px solid transparent;border-right:5px solid transparent;border-top:5px solid #333"></div></div>
  <div class="lb" style="left:281px;top:238px">表格高度</div>
  <div class="inp" style="left:341px;top:236px;width:80px;height:20px;line-height:14px">5</div>
  <div class="cb" style="left:120px;top:263px"></div><div class="lb" style="left:136px;top:263px">表头置下</div>
  <div class="cb" style="left:248px;top:263px"></div><div class="lb" style="left:265px;top:263px">按材料厚度统计表面积</div>
  <div class="cb" style="left:120px;top:285px"></div><div class="lb" style="left:136px;top:285px">按编号统计通风、除尘风管</div>
  <div class="btn" style="left:99px;top:315px;width:73px;height:19px;border-color:#2f7fd6;background:#fafafa">确定</div>
  <div class="btn" style="left:280px;top:315px;width:73px;height:19px">取消</div>
  </div>
</div>
</body></html>
